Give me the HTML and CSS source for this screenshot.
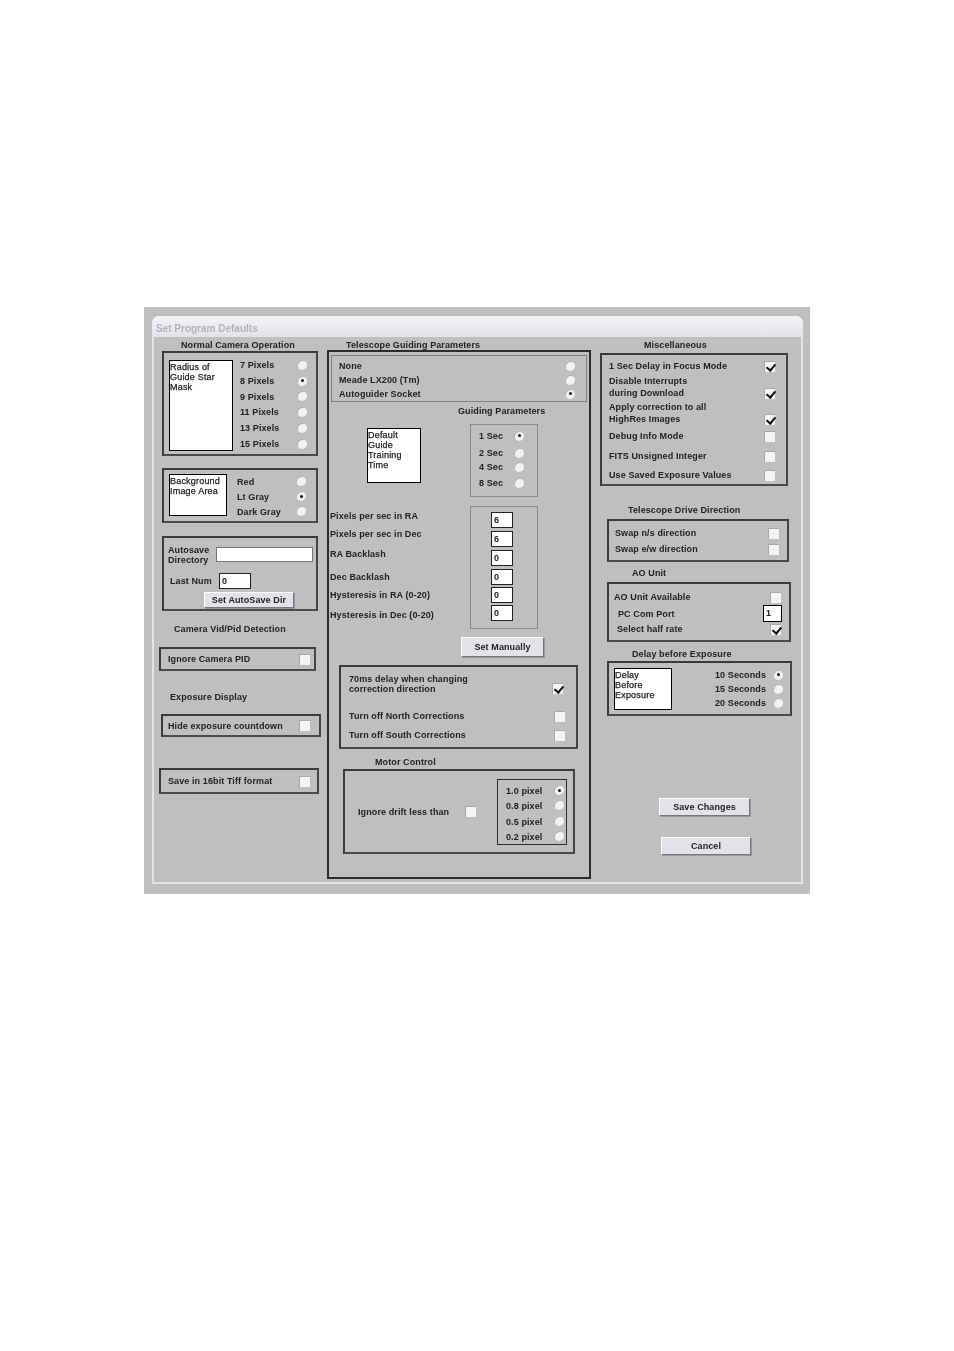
FILE: index.html
```html
<!DOCTYPE html>
<html lang="en">
<head>
  <meta charset="UTF-8">
  <title>Set Program Defaults</title>
  <link rel="stylesheet" href="styles.css">
</head>
<body>

  <div class="window">
    <div class="frame">
      <div class="titlebar">Set Program Defaults</div>

      <div class="columns">

        <!-- left column -->
        <div class="col col-left">
          <div class="heading h13 pl22">Normal Camera Operation</div>

          <div class="panel radius-panel">
            <div class="listbox radius-list">Radius of<br>Guide Star<br>Mask</div>
            <div class="radius-options">
              <label class="opt"><span>7 Pixels</span><i class="radio"></i></label>
              <label class="opt"><span>8 Pixels</span><i class="radio on"></i></label>
              <label class="opt"><span>9 Pixels</span><i class="radio"></i></label>
              <label class="opt"><span>11 Pixels</span><i class="radio"></i></label>
              <label class="opt"><span>13 Pixels</span><i class="radio"></i></label>
              <label class="opt"><span>15 Pixels</span><i class="radio"></i></label>
            </div>
          </div>

          <div class="panel bg-panel">
            <div class="listbox bg-list">Background<br>Image Area</div>
            <div class="bg-options">
              <label class="opt"><span>Red</span><i class="radio"></i></label>
              <label class="opt"><span>Lt Gray</span><i class="radio on"></i></label>
              <label class="opt"><span>Dark Gray</span><i class="radio"></i></label>
            </div>
          </div>

          <div class="panel autosave-panel">
            <div class="autosave-dir">
              <span class="two-line dir-label">Autosave<br>Directory</span>
              <div class="field dir-field"></div>
            </div>
            <div class="autosave-num">
              <span class="num-label">Last Num</span>
              <div class="field num-field">0</div>
            </div>
            <button class="btn autosave-btn">Set AutoSave Dir</button>
          </div>

          <div class="heading h14 mt11 pl15">Camera Vid/Pid Detection</div>
          <div class="panel single-panel pid-panel mt11">
            <span>Ignore Camera PID</span><i class="check"></i>
          </div>

          <div class="heading h14 mt19 pl11">Exposure Display</div>
          <div class="panel single-panel hide-panel mt10">
            <span>Hide exposure countdown</span><i class="check"></i>
          </div>

          <div class="panel single-panel tiff-panel mt31">
            <span>Save in 16bit Tiff format</span><i class="check"></i>
          </div>
        </div>

        <!-- middle column -->
        <div class="col col-mid">
          <div class="heading h12 pl19 guide-title">Telescope Guiding Parameters</div>

          <div class="guide-box">
            <div class="scope-panel">
              <label class="opt"><span>None</span><i class="radio"></i></label>
              <label class="opt"><span>Meade LX200 (Tm)</span><i class="radio"></i></label>
              <label class="opt"><span>Autoguider Socket</span><i class="radio on"></i></label>
            </div>

            <div class="heading h14 mt2 guiding-title">Guiding Parameters</div>

            <div class="training-row">
              <div class="listbox training-list">Default<br>Guide<br>Training<br>Time</div>
              <div class="thin-box training-box">
                <label class="opt r18"><span>1 Sec</span><i class="radio on"></i></label>
                <label class="opt r16"><span>2 Sec</span><i class="radio"></i></label>
                <label class="opt r12"><span>4 Sec</span><i class="radio"></i></label>
                <label class="opt r20"><span>8 Sec</span><i class="radio"></i></label>
              </div>
            </div>

            <div class="rates-row">
              <div class="rate-labels">
                <div>Pixels per sec in RA</div>
                <div class="mt6">Pixels per sec in Dec</div>
                <div class="mt8">RA Backlash</div>
                <div class="mt11">Dec Backlash</div>
                <div class="mt6">Hysteresis in RA (0-20)</div>
                <div class="mt8">Hysteresis in Dec (0-20)</div>
              </div>
              <div class="thin-box rates-box">
                <div class="field rate-field">6</div>
                <div class="field rate-field mt3">6</div>
                <div class="field rate-field mt3">0</div>
                <div class="field rate-field mt3">0</div>
                <div class="field rate-field mt2">0</div>
                <div class="field rate-field mt2">0</div>
              </div>
            </div>

            <button class="btn manual-btn">Set Manually</button>

            <div class="panel delay-panel">
              <div class="row delay-first"><span class="two-line">70ms delay when changing<br>correction direction</span><i class="check on"></i></div>
              <div class="row mt16"><span>Turn off North Corrections</span><i class="check"></i></div>
              <div class="row mt7"><span>Turn off South Corrections</span><i class="check"></i></div>
            </div>

            <div class="heading h14 mt6 motor-title">Motor Control</div>
            <div class="panel motor-panel">
              <div class="row drift-row"><span>Ignore drift less than</span><i class="check"></i></div>
              <div class="drift-box">
                <label class="opt r14"><span>1.0 pixel</span><i class="radio on"></i></label>
                <label class="opt r16"><span>0.8 pixel</span><i class="radio"></i></label>
                <label class="opt r16"><span>0.5 pixel</span><i class="radio"></i></label>
                <label class="opt r14"><span>0.2 pixel</span><i class="radio"></i></label>
              </div>
            </div>
          </div>
        </div>

        <!-- right column -->
        <div class="col col-right">
          <div class="heading h14 pl44">Miscellaneous</div>
          <div class="panel misc-panel mt1">
            <div class="row"><span>1 Sec Delay in Focus Mode</span><i class="check on"></i></div>
            <div class="row tall mt3"><span>Disable Interrupts<br>during Download</span><i class="check on"></i></div>
            <div class="row tall mt2"><span>Apply correction to all<br>HighRes Images</span><i class="check on"></i></div>
            <div class="row mt5"><span>Debug Info Mode</span><i class="check"></i></div>
            <div class="row mt8"><span>FITS Unsigned Integer</span><i class="check"></i></div>
            <div class="row mt7"><span>Use Saved Exposure Values</span><i class="check"></i></div>
          </div>

          <div class="heading h14 mt17 pl28">Telescope Drive Direction</div>
          <div class="panel drive-panel mt2">
            <div class="row"><span>Swap n/s direction</span><i class="check"></i></div>
            <div class="row mt4"><span>Swap e/w direction</span><i class="check"></i></div>
          </div>

          <div class="heading h14 mt4 pl32">AO Unit</div>
          <div class="panel ao-panel mt2">
            <div class="row"><span>AO Unit Available</span><i class="check"></i></div>
            <div class="row port-row mt2"><span>PC Com Port</span><div class="field port-field">1</div></div>
            <div class="row half-row mt1"><span>Select half rate</span><i class="check on"></i></div>
          </div>

          <div class="heading h14 mt5 pl32">Delay before Exposure</div>
          <div class="panel exposure-panel">
            <div class="listbox exposure-list">Delay<br>Before<br>Exposure</div>
            <div class="exposure-options">
              <label class="opt"><span>10 Seconds</span><i class="radio on"></i></label>
              <label class="opt"><span>15 Seconds</span><i class="radio"></i></label>
              <label class="opt"><span>20 Seconds</span><i class="radio"></i></label>
            </div>
          </div>

          <button class="btn save-btn">Save Changes</button>
          <button class="btn cancel-btn">Cancel</button>
        </div>

      </div>
    </div>
  </div>

</body>
</html>
```

FILE: styles.css
```css
* {
  box-sizing: border-box;
}

html, body {
  margin: 0;
  padding: 0;
  background-color: #fff;
}

body {
  height: 1351px;
  padding: 307px 0 0 144px;
  font: bold 9px/12px "Liberation Sans", Arial, sans-serif;
  letter-spacing: 0.1px;
  color: #222;
  white-space: nowrap;
}

/* the source is a soft, scaled scan of the dialog */
.window {
  width: 666px;
  height: 587px;
  padding: 9px 7px 10px 8px;
  background-color: #bfbfbf;
  filter: blur(0.3px);
}

.frame {
  height: 568px;
  border: 2px solid #e4e4e8;
  border-top: none;
  border-radius: 7px 7px 0 0;
  background-color: #bfbfbf;
}

.titlebar {
  height: 21px;
  margin: 0 -2px;
  padding: 6px 0 0 4px;
  border-radius: 7px 7px 0 0;
  background: linear-gradient(#f4f4f6, #e2e2e8);
  color: #b4b4b8;
  font-size: 10px;
  line-height: 13px;
  letter-spacing: 0;
}

.columns {
  display: flex;
  padding: 1px 0 0 5px;
}

.col {
  display: flex;
  flex-direction: column;
  align-items: flex-start;
}

.col-left { width: 162px; }
.col-mid { width: 264px; margin-left: 6px; }
.col-right { width: 192px; margin-left: 9px; }

/* spacing helpers */
.mt1 { margin-top: 1px; }
.mt2 { margin-top: 2px; }
.mt3 { margin-top: 3px; }
.mt4 { margin-top: 4px; }
.mt5 { margin-top: 5px; }
.mt6 { margin-top: 6px; }
.mt7 { margin-top: 7px; }
.mt8 { margin-top: 8px; }
.mt10 { margin-top: 10px; }
.mt11 { margin-top: 11px; }
.mt16 { margin-top: 16px; }
.mt17 { margin-top: 17px; }
.mt19 { margin-top: 19px; }
.mt31 { margin-top: 31px; }
.pl11 { padding-left: 11px; }
.pl15 { padding-left: 15px; }
.pl19 { padding-left: 19px; }
.pl22 { padding-left: 22px; }
.pl28 { padding-left: 28px; }
.pl32 { padding-left: 32px; }
.pl44 { padding-left: 44px; }

.heading { display: flex; align-items: center; }
.h12 { height: 12px; }
.h13 { height: 13px; }
.h14 { height: 14px; }

.guide-title { padding-top: 2px; }

.panel {
  border: 2px solid #3a3a3a;
  border-right-color: #444;
  border-bottom-color: #4a4a4a;
}

.thin-box {
  border: 1px solid #8a8a8a;
}

.listbox {
  background-color: #fff;
  border: 1px solid #000;
  padding: 1px 0 0 0;
  line-height: 10px;
  font-weight: normal;
  letter-spacing: 0.2px;
  -webkit-text-stroke: 0.25px #222;
  overflow: hidden;
}

.field {
  background-color: #fff;
  border: 1px solid #222;
  padding-left: 2px;
  line-height: 14px;
}

.btn {
  display: block;
  padding: 0;
  font: inherit;
  letter-spacing: inherit;
  color: #222;
  background-color: #e2e2e8;
  border: 1px solid;
  border-color: #fff #777 #777 #fff;
  box-shadow: 1px 1px 0 #999;
}

.radio {
  display: block;
  flex: none;
  position: relative;
  width: 10px;
  height: 10px;
  margin-top: -1px;
  border-radius: 50%;
  background-color: #f2f2f2;
  box-shadow: inset 1px 1px 0 #b0b0b0;
}

.radio.on::after {
  content: "";
  position: absolute;
  left: 3.5px;
  top: 3.5px;
  width: 3px;
  height: 3px;
  border-radius: 50%;
  background-color: #111;
}

.check {
  display: block;
  flex: none;
  position: relative;
  width: 11px;
  height: 11px;
  background-color: #f4f4f4;
  box-shadow: inset 1px 1px 0 #a8a8a8;
}

.check.on::after {
  content: "";
  position: absolute;
  left: 4px;
  top: 1px;
  width: 4px;
  height: 7px;
  border: solid #111;
  border-width: 0 2px 2px 0;
  transform: rotate(40deg);
}

.opt, .row {
  display: flex;
  justify-content: space-between;
  align-items: center;
}

.row { height: 12px; }
.row.tall { height: 24px; align-items: flex-end; }

.two-line { line-height: 10px; }

/* left column */
.radius-panel {
  display: flex;
  width: 156px;
  height: 105px;
  margin-left: 3px;
  padding: 4px 0 0 5px;
}

.radius-list { width: 64px; height: 91px; margin-top: 3px; }

.radius-options {
  display: grid;
  grid-template-rows: 16px 16px 15px 16px 16px 16px;
  width: 67px;
  margin-left: 7px;
}

.bg-panel {
  display: flex;
  width: 156px;
  height: 55px;
  margin: 12px 0 0 3px;
  padding: 4px 0 0 5px;
}

.bg-list { width: 58px; height: 42px; }

.bg-options {
  display: grid;
  grid-template-rows: repeat(3, 15px);
  width: 69px;
  height: 45px;
  margin: 0 0 0 10px;
}

.autosave-panel {
  width: 156px;
  height: 75px;
  margin: 13px 0 0 3px;
  padding: 9px 0 0 4px;
}

.autosave-dir { display: flex; align-items: center; height: 15px; }
.dir-label { width: 48px; }
.dir-field { width: 97px; height: 15px; border-color: #777; }

.autosave-num { display: flex; align-items: center; margin: 11px 0 0 2px; height: 16px; }
.num-label { width: 49px; }
.num-field { width: 32px; height: 16px; }

.autosave-btn { width: 90px; height: 16px; margin: 3px 0 0 36px; }

.single-panel {
  display: flex;
  justify-content: space-between;
  align-items: center;
}

.pid-panel { width: 157px; height: 24px; padding: 0 4px 0 7px; }
.hide-panel { width: 160px; height: 23px; margin-left: 2px; padding: 0 9px 0 5px; }
.tiff-panel { width: 160px; height: 26px; padding: 0 7px 0 7px; }

/* middle column */
.guide-box {
  width: 264px;
  height: 529px;
  border: 2px solid #2c2c2c;
}

.scope-panel {
  width: 256px;
  height: 47px;
  margin: 3px 0 0 2px;
  padding: 3px 11px 0 7px;
  border: 1px solid #808080;
}

.scope-panel .opt { height: 14px; }

.guiding-title { padding-left: 129px; }

.training-row { display: flex; align-items: flex-start; }

.training-list { width: 54px; height: 55px; margin: 10px 0 0 38px; }

.training-box {
  width: 68px;
  height: 73px;
  margin: 6px 0 0 49px;
  padding: 2px 0 0 8px;
}

.training-box .opt { width: 45px; }

.r12 { height: 12px; }
.r14 { height: 14px; }
.r16 { height: 16px; }
.r18 { height: 18px; }
.r20 { height: 20px; }

.rates-row { display: flex; margin-top: 9px; }

.rate-labels { width: 140px; margin-left: 1px; padding-top: 4px; }

.rates-box { width: 68px; height: 123px; padding: 5px 0 0 20px; }

.rate-field { width: 22px; height: 16px; }

.manual-btn { width: 83px; height: 20px; margin: 8px 0 0 132px; }

.delay-panel {
  width: 239px;
  height: 84px;
  margin: 8px 0 0 10px;
  padding: 7px 11px 0 8px;
}

.delay-first { height: 20px; }
.delay-first .check { margin: 8px 2px 0 0; }

.motor-title { padding-left: 46px; }

.motor-panel {
  display: flex;
  align-items: center;
  width: 232px;
  height: 85px;
  margin-left: 14px;
  padding-left: 13px;
}

.drift-row { width: 118px; margin-right: 1px; }

.drift-box {
  width: 70px;
  height: 66px;
  margin-left: 20px;
  padding: 4px 0 0 8px;
  border: 1px solid #2c2c2c;
}

.drift-box .opt { width: 58px; }

/* right column */
.misc-panel {
  width: 188px;
  height: 133px;
  padding: 5px 0 0 7px;
}

.misc-panel .row { width: 166px; }

.drive-panel {
  width: 182px;
  height: 43px;
  margin-left: 7px;
  padding: 6px 0 0 6px;
}

.drive-panel .row { width: 164px; }

.ao-panel {
  width: 184px;
  height: 60px;
  margin-left: 7px;
  padding: 7px 0 0 5px;
}

.ao-panel .row { width: 167px; }
.ao-panel .port-row { width: 168px; }

.port-row { height: 17px; padding-left: 4px; }
.port-field { width: 19px; height: 17px; line-height: 15px; border-color: #000; }
.half-row { padding-left: 3px; }

.exposure-panel {
  display: flex;
  width: 185px;
  height: 55px;
  margin-left: 7px;
  padding: 5px 0 0 5px;
}

.exposure-list { width: 58px; height: 42px; }

.exposure-options { width: 68px; margin-left: 43px; }
.exposure-options .opt { height: 14px; }

.save-btn { width: 91px; height: 18px; margin: 82px 0 0 59px; }
.cancel-btn { width: 90px; height: 18px; margin: 21px 0 0 61px; }
```
